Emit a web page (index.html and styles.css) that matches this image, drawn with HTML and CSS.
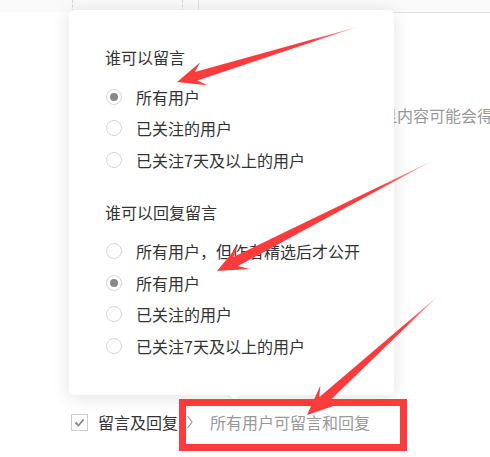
FILE: index.html
```html
<!DOCTYPE html>
<html lang="zh-CN">
<head>
  <meta charset="UTF-8">
  <title>留言设置</title>
  <link rel="stylesheet" href="styles.css">
</head>
<body>

<div class="page">
  <div class="table-head">
    <span class="cell cell-a"></span>
    <span class="cell cell-b"></span>
    <span class="cell cell-c"></span>
    <span class="cell cell-d"></span>
  </div>

  <p class="hint">显内容可能会得到更多</p>

  <div class="setting-row">
    <span class="checkbox">
      <svg width="17" height="17" viewBox="0 0 17 17"><polyline points="4.5,8.5 7.5,11.5 12.5,5.5" fill="none" stroke="#888" stroke-width="1.8"/></svg>
    </span>
    <span class="setting-label">留言及回复</span>
    <svg class="chevron" width="8" height="16" viewBox="0 0 8 16"><polyline points="1.5,2 6,8 1.5,14" fill="none" stroke="#999" stroke-width="1.2"/></svg>
    <span class="setting-value">所有用户可留言和回复</span>
  </div>

  <div class="popover">
    <div class="group">
      <div class="group-title">谁可以留言</div>
      <ul class="options">
        <li class="option checked"><span class="radio"></span>所有用户</li>
        <li class="option"><span class="radio"></span>已关注的用户</li>
        <li class="option"><span class="radio"></span>已关注7天及以上的用户</li>
      </ul>
    </div>
    <div class="group">
      <div class="group-title">谁可以回复留言</div>
      <ul class="options">
        <li class="option"><span class="radio"></span>所有用户，但作者精选后才公开</li>
        <li class="option checked"><span class="radio"></span>所有用户</li>
        <li class="option"><span class="radio"></span>已关注的用户</li>
        <li class="option"><span class="radio"></span>已关注7天及以上的用户</li>
      </ul>
    </div>
  </div>

  <!-- annotation layer: arrows and frame drawn on top of the screenshot -->
  <svg class="marks" width="490" height="457" viewBox="0 0 490 457">
    <defs>
      <linearGradient id="tail1" x1="357" y1="27" x2="177" y2="82" gradientUnits="userSpaceOnUse">
        <stop offset="0" stop-color="#fc3c3c" stop-opacity="0.35"/>
        <stop offset="0.25" stop-color="#fc3c3c"/>
      </linearGradient>
      <linearGradient id="tail2" x1="432" y1="161" x2="217" y2="271" gradientUnits="userSpaceOnUse">
        <stop offset="0" stop-color="#fc3c3c" stop-opacity="0.35"/>
        <stop offset="0.25" stop-color="#fc3c3c"/>
      </linearGradient>
      <linearGradient id="tail3" x1="438" y1="296" x2="307" y2="415" gradientUnits="userSpaceOnUse">
        <stop offset="0" stop-color="#fc3c3c" stop-opacity="0.35"/>
        <stop offset="0.25" stop-color="#fc3c3c"/>
      </linearGradient>
    </defs>
    <rect x="182.5" y="402.5" width="221" height="45" fill="none" stroke="#fc3c3c" stroke-width="7"/>
    <polygon fill="url(#tail1)" points="357,27 197.4,80.5 207.3,85.3 177,82 200.3,62.3 194.8,71.9"/>
    <polygon fill="url(#tail2)" points="432,161 238,265.9 249.6,268.9 217,271 237.8,245.8 233.4,257"/>
    <polygon fill="url(#tail3)" points="438,296 325.9,404.6 337.9,404.5 307,415 320.5,385.2 319.2,397.2"/>
  </svg>
</div>

</body>
</html>
```

FILE: styles.css
```css
body {
  margin: 0;
  background: #fff;
  font-family: "Noto Sans CJK SC", "Noto Sans", sans-serif;
  color: #333;
}

.page {
  position: relative;
  width: 490px;
  height: 457px;
  overflow: hidden;
}

/* table behind the popover */
.table-head {
  display: flex;
  height: 12px;
  background: #fafafa;
}

.cell {
  display: block;
  height: 100%;
}

.cell-a {
  width: 72px;
}

.cell-b {
  width: 109px;
  border-left: 1px dashed #d8d8d8;
}

.cell-c {
  width: 15px;
  border-left: 1px dashed #d8d8d8;
}

.cell-d {
  flex: 1;
  border-left: 1px solid #e2e2e2;
  border-bottom: 1px solid #e2e2e2;
}

.hint {
  margin: 92px 0 0;
  padding-left: 381px;
  font-size: 16px;
  line-height: 22px;
  color: #999;
  white-space: nowrap;
}

.setting-row {
  display: flex;
  align-items: center;
  height: 20px;
  margin-top: 286px;
  padding-left: 71px;
  font-size: 16px;
}

.checkbox {
  display: flex;
  width: 17px;
  height: 17px;
  box-sizing: border-box;
  border: 1px solid #ccc;
  margin-right: 10px;
  align-items: center;
  justify-content: center;
}

.checkbox svg {
  display: block;
  flex: none;
}

.setting-label {
  color: #333;
}

.chevron {
  margin-left: 8px;
  margin-right: 16px;
}

.setting-value {
  color: #999;
}

/* popover */
.popover {
  position: absolute;
  top: 10px;
  left: 69px;
  width: 325px;
  height: 385px;
  box-sizing: border-box;
  padding: 37px 0 0 36px;
  background: #fff;
  border-radius: 5px;
  box-shadow: 0 2px 18px rgba(0, 0, 0, 0.12);
}

.popover::after {
  content: "";
  position: absolute;
  left: 162px;
  bottom: -4px;
  width: 8px;
  height: 8px;
  background: #fff;
  transform: rotate(45deg);
  box-shadow: 2px 2px 3px rgba(0, 0, 0, 0.05);
}

.group + .group {
  margin-top: 26px;
}

.group-title {
  font-size: 16px;
  line-height: 20px;
  color: #333;
}

.options {
  list-style: none;
  margin: 14px 0 0;
  padding: 0;
}

.option {
  display: flex;
  align-items: center;
  height: 31.5px;
  font-size: 16px;
  color: #333;
  white-space: nowrap;
}

.radio {
  position: relative;
  width: 16px;
  height: 16px;
  box-sizing: border-box;
  margin: 0 14px 0 1px;
  border: 1px solid #d6d6d6;
  border-radius: 50%;
  background: #fff;
}

.option.checked .radio::after {
  content: "";
  position: absolute;
  top: 3px;
  left: 3px;
  width: 8px;
  height: 8px;
  border-radius: 50%;
  background: #888;
}

.marks {
  position: absolute;
  top: 0;
  left: 0;
  pointer-events: none;
}
```
